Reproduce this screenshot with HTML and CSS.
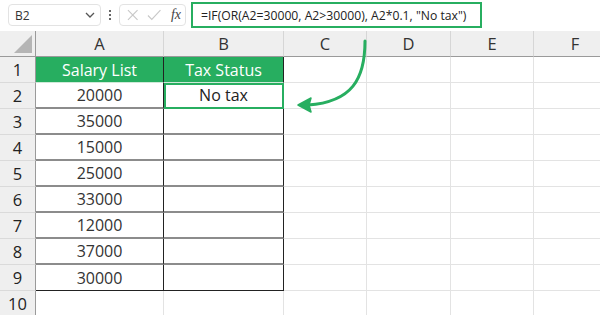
FILE: index.html
```html
<!DOCTYPE html>
<html lang="en">

<head>
    <meta charset="UTF-8">
    <meta name="viewport" content="width=device-width, initial-scale=1.0">
    <title>IF OR formula</title>
    <link rel="stylesheet" href="styles.css">
</head>

<body>
    <div class="app">
        <header class="bar">
            <div class="name-box">
                <span>B2</span>
                <svg class="chev" width="10" height="6" viewBox="0 0 10 6">
                    <path d="M1 1 L5 5 L9 1" fill="none" stroke="#555" stroke-width="1.3" />
                </svg>
            </div>
            <div class="dots"><i></i><i></i><i></i></div>
            <div class="fx-box">
                <svg width="12" height="12" viewBox="0 0 12 12">
                    <path d="M1 1 L11 11 M11 1 L1 11" stroke="#c8c8c8" stroke-width="1.2" />
                </svg>
                <svg width="15" height="12" viewBox="0 0 15 12">
                    <path d="M1 6.5 L5 10.5 L14 1" fill="none" stroke="#c8c8c8" stroke-width="1.2" />
                </svg>
                <span class="fx">fx</span>
            </div>
            <div class="formula">=IF(OR(A2=30000, A2&gt;30000), A2*0.1, "No tax")</div>
        </header>

        <div class="sheet">
            <div class="hd corner"><span class="tri"></span></div>
            <div class="hd">A</div>
            <div class="hd">B</div>
            <div class="hd">C</div>
            <div class="hd">D</div>
            <div class="hd">E</div>
            <div class="hd">F</div>

            <div class="rn">1</div>
            <div class="c ta title">Salary List</div>
            <div class="c tb title">Tax Status</div>
            <div class="c"></div><div class="c"></div><div class="c"></div><div class="c"></div>

            <div class="rn">2</div>
            <div class="c ta">20000</div>
            <div class="c tb sel">No tax</div>
            <div class="c"></div><div class="c"></div><div class="c"></div><div class="c"></div>

            <div class="rn">3</div>
            <div class="c ta">35000</div>
            <div class="c tb"></div>
            <div class="c"></div><div class="c"></div><div class="c"></div><div class="c"></div>

            <div class="rn">4</div>
            <div class="c ta">15000</div>
            <div class="c tb"></div>
            <div class="c"></div><div class="c"></div><div class="c"></div><div class="c"></div>

            <div class="rn">5</div>
            <div class="c ta">25000</div>
            <div class="c tb"></div>
            <div class="c"></div><div class="c"></div><div class="c"></div><div class="c"></div>

            <div class="rn">6</div>
            <div class="c ta">33000</div>
            <div class="c tb"></div>
            <div class="c"></div><div class="c"></div><div class="c"></div><div class="c"></div>

            <div class="rn">7</div>
            <div class="c ta">12000</div>
            <div class="c tb"></div>
            <div class="c"></div><div class="c"></div><div class="c"></div><div class="c"></div>

            <div class="rn">8</div>
            <div class="c ta">37000</div>
            <div class="c tb"></div>
            <div class="c"></div><div class="c"></div><div class="c"></div><div class="c"></div>

            <div class="rn">9</div>
            <div class="c ta last">30000</div>
            <div class="c tb last"></div>
            <div class="c"></div><div class="c"></div><div class="c"></div><div class="c"></div>

            <div class="rn">10</div>
            <div class="c"></div><div class="c"></div><div class="c"></div>
            <div class="c"></div><div class="c"></div><div class="c"></div>

            <svg class="arrow" width="90" height="80" viewBox="0 0 90 80">
                <path d="M75 2 C75 40 62 63 18 66" fill="none" stroke="#27ae60" stroke-width="3" stroke-linecap="round" />
                <path d="M8 66 L21 59 L19 66 L21 73 Z" fill="#27ae60" stroke="#27ae60" stroke-width="1.5" stroke-linejoin="round" />
            </svg>
        </div>
    </div>
</body>

</html>
```

FILE: styles.css
```css
* {
    margin: 0;
    padding: 0;
    box-sizing: border-box;
}

body {
    width: 600px;
    height: 315px;
    overflow: hidden;
    background: #fff;
    font-family: "Open Sans", "Noto Sans", sans-serif;
    color: #222;
}

.bar {
    display: flex;
    align-items: center;
    height: 31px;
    padding: 0 0 1px 8px;
    background: #fff;
}

.name-box {
    display: flex;
    align-items: center;
    justify-content: space-between;
    width: 93px;
    height: 22px;
    padding: 0 5px 0 6px;
    border: 1px solid #e3e3e3;
    border-radius: 4px;
    font-size: 12px;
    color: #333;
}

.dots {
    display: flex;
    flex-direction: column;
    gap: 2px;
    margin: 0 8px 0 8px;
}

.dots i {
    width: 2px;
    height: 2px;
    background: #666;
}

.fx-box {
    display: flex;
    align-items: center;
    gap: 8px;
    width: 67px;
    height: 22px;
    padding: 0 4px 0 7px;
    border: 1px solid #e3e3e3;
    border-radius: 4px;
}

.fx {
    margin-left: 2px;
    font-family: "Liberation Serif", serif;
    font-style: italic;
    font-size: 14px;
    color: #444;
}

.formula {
    display: flex;
    align-items: center;
    width: 291px;
    height: 26px;
    margin-left: 5px;
    padding-left: 8px;
    border: 2px solid #27ae60;
    font-size: 12.2px;
    color: #222;
    white-space: nowrap;
}

.sheet {
    position: relative;
    display: grid;
    grid-template-columns: 36px 128px 120px 83px 84px 83px 83px;
    grid-template-rows: 26px;
    grid-auto-rows: 26px;
}

.hd {
    display: flex;
    align-items: center;
    justify-content: center;
    background: #efefef;
    border-right: 1px solid #d6d6d6;
    border-bottom: 1px solid #9a9a9a;
    font-size: 16.5px;
    color: #333;
}

.corner {
    position: relative;
    border-right-color: #9a9a9a;
}

.tri {
    position: absolute;
    right: 3px;
    bottom: 3px;
    width: 18px;
    height: 18px;
    background: #b5b5b5;
    clip-path: polygon(100% 0, 100% 100%, 0 100%);
}

.rn {
    display: flex;
    align-items: center;
    justify-content: center;
    background: #efefef;
    border-right: 1px solid #9a9a9a;
    border-bottom: 1px solid #dadada;
    font-size: 16.5px;
    color: #222;
}

.c {
    display: flex;
    align-items: center;
    justify-content: center;
    border-right: 1px solid #e3e3e3;
    border-bottom: 1px solid #e3e3e3;
    font-size: 16px;
    color: #333;
}

.ta,
.tb {
    border-right: 1px solid #222;
    border-bottom: 2px solid #8c8c8c;
}

.ta.last,
.tb.last {
    border-bottom: 1px solid #222;
}

.title {
    background: #27ae60;
    color: #fff;
    border-bottom: 1px solid #cfe9d8;
}

.sel {
    outline: 2px solid #27ae60;
    outline-offset: -2px;
    color: #222;
}

.arrow {
    position: absolute;
    left: 290px;
    top: 8px;
}
```
